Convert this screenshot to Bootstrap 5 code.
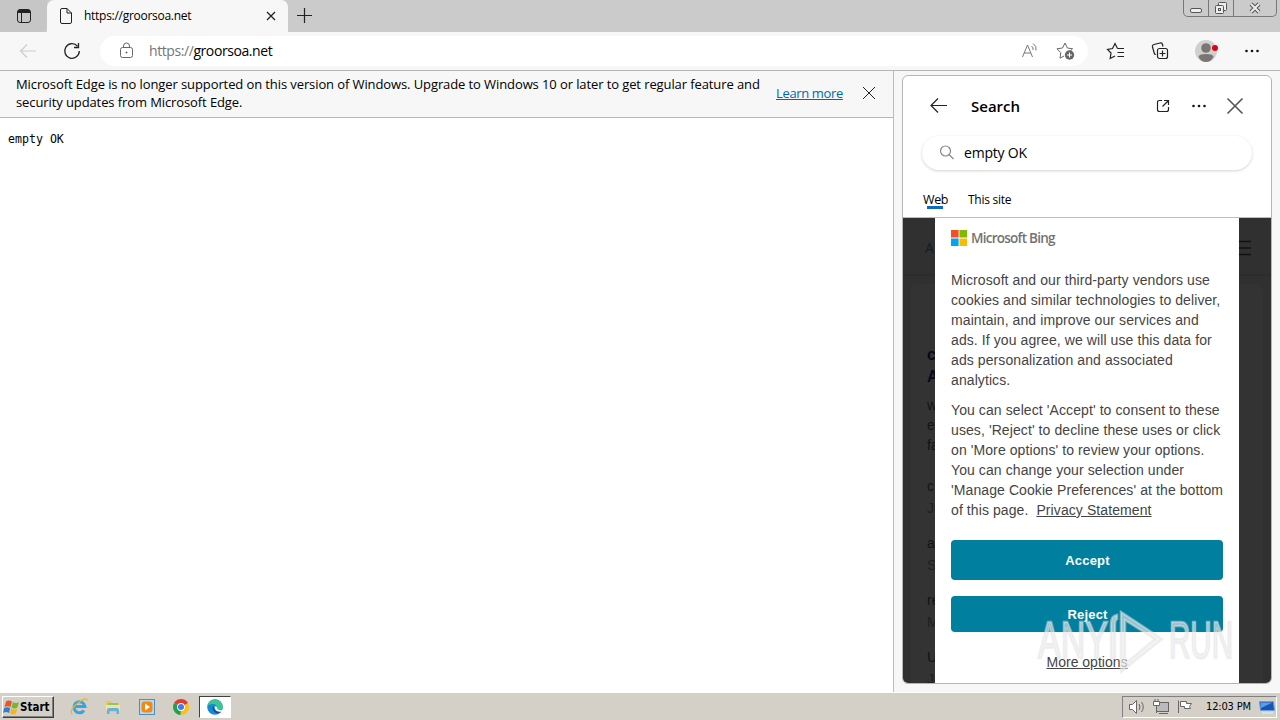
<!DOCTYPE html>
<html lang="en">
<head>
    <meta charset="UTF-8">
    <meta name="viewport" content="width=device-width, initial-scale=1.0">
    <title>https://groorsoa.net</title>
    <link rel="stylesheet" href="https://cdn.jsdelivr.net/npm/bootstrap@5.3.0/dist/css/bootstrap.min.css">
    <style>
        body {
            width: 1280px;
            height: 720px;
            overflow: hidden;
            background: #f7f7f7;
            color: #000;
            font-family: "Open Sans", "Noto Sans", sans-serif;
            font-size: 13px;
            line-height: 18px;
            white-space: nowrap;
        }
        svg {
            display: block;
            flex: none;
            fill: none;
            stroke: #222;
        }

        /* tab strip */
        .tabstrip { height: 32px; background: #cbcbcb; }
        .workspaces { width: 47px; border-radius: 0 0 7px 0; background: #c6c6c6; }
        .browser-tab { width: 241px; background: #f7f7f7; border-radius: 7px 7px 0 0; padding: 0 10px 0 12px; }
        .tab-title { font-size: 12px; margin-left: 11px; letter-spacing: -.28px; }
        .window-buttons { width: 94px; height: 17px; border: 1px solid #777; border-top: 0; border-radius: 0 0 5px 5px; margin-right: 3px; }

        /* toolbar */
        .toolbar { height: 38px; padding-left: 6px; }
        .tool { width: 44px; }
        .address { width: 988px; height: 30px; border-radius: 15px; background: #fff; margin-left: 6px; margin-right: 6px; }
        .url { font-size: 14px; letter-spacing: -.42px; margin-left: 15px; }
        .scheme { color: #757575; }

        /* page pane */
        .main-row { height: 622px; border-top: 1px solid #b5b5b5; }
        .page-pane { width: 894px; border-right: 1px solid #bbb; background: #fff; }
        .infobar { height: 47px; background: #f7f7f7; border-bottom: 1px solid #b5b5b5; padding: 0 0 2px 16px; }
        .infotext { width: 760px; flex: none; letter-spacing: -.1px; }
        .learn { color: #0067b0; letter-spacing: -.35px; }
        .page-body { font: 11.6px/16px "DejaVu Sans Mono", monospace; padding: 13px 8px; }

        /* side panel */
        .side-panel { width: 370px; height: 609px; margin: 4px 0 0 8px; border: 1px solid #b5b5b5; border-radius: 6px; background: #fff; overflow: hidden; }
        .panel-head { height: 60px; padding-left: 18px; padding-right: 2px; }
        .panel-title { font-size: 15px; font-weight: 600; letter-spacing: 0; margin-left: 14px; }
        .panel-tool { width: 36px; }
        .panel-search { height: 34px; margin: 0 19px; border-radius: 17px; box-shadow: 0 1px 3px rgba(0, 0, 0, .18); padding-left: 16px; }
        .query { font-size: 14px; margin-left: 10px; letter-spacing: -.2px; }
        .panel-tabs { height: 48px; padding: 21px 0 0 20px; font-size: 12px; border-bottom: 1px solid #bdbdbd; }
        .panel-tab { height: 20px; letter-spacing: -.25px; }
        .panel-tab.chosen { width: 45px; font-size: 12.5px; letter-spacing: -.4px; }
        .panel-tab.chosen::after { content: ""; display: block; width: 16px; height: 3px; margin: -3px 0 0 4px; background: #0f6cbd; }
        .results { height: 466px; background: #303030; overflow: hidden; }
        .result-nav { height: 58px; border-bottom: 2px solid #2c2c2c; padding: 4px 20px 0 22px; color: #101c2c; font-size: 14px; }
        .result-card { margin: 8px; height: 420px; border-radius: 6px 6px 0 0; background: #333; padding: 60px 16px; font: 14px/20px "Liberation Sans", sans-serif; color: #141414; }
        .result-card h2 { font: bold 16px/22px "Liberation Sans", sans-serif; color: #08081f; margin: 0 0 7px; }
        .result-card p { margin: 0 0 20px; }
        .result-card .pair { line-height: 22px; margin: 0 0 13px; }
        .dim { color: #1f1f1f; }

        /* consent dialog over the results */
        .consent { left: 32px; top: 0; width: 304px; height: 466px; background: #fff; padding: 12px 16px; font: 14px/20px "Liberation Sans", sans-serif; color: #444; }
        .bing-name { font: 600 13.5px/16px "Open Sans", sans-serif; color: #737373; margin-left: 4px; letter-spacing: -.75px; }
        .consent p { margin: 0 0 10px; letter-spacing: .09px; }
        .consent a { color: #444; }
        .consent .btn { --bs-btn-font-size: 13px; --bs-btn-border-radius: 4px; background: #007f9f; color: #fff; font-weight: bold; padding: 2px 0 0 1px; border: 0; letter-spacing: .2px; }
        .accept { height: 40px; margin: 10px 0 16px; }
        .reject { height: 36px; }

        .watermark { left: 1034px; top: 606px; }

        /* taskbar */
        .taskbar { height: 28px; background: #d4d0c8; border-top: 1px solid #fff; padding: 1px 3px 0 2px; font: 11px/14px "DejaVu Sans Condensed", sans-serif; }
        .start { width: 52px; height: 22px; border: 1px solid; border-color: #fff #404040 #404040 #fff; box-shadow: inset -1px -1px #808080; font-weight: bold; margin-right: 8px; }
        .start-label { font-size: 11.5px; }
        .task { width: 34px; height: 22px; }
        .task.running { width: 32px; background: #fff; border: 1px solid; border-color: #404040 #fff #fff #404040; margin-left: 1px; }
        .tray { width: 155px; height: 22px; border: 1px solid; border-color: #808080 #fff #fff #808080; padding-left: 5px; }
        .clock { font: 11px/14px "DejaVu Sans Condensed", sans-serif; letter-spacing: -.15px; }
    </style>
</head>
<body>
    <div class="tabstrip d-flex">
        <div class="workspaces d-flex align-items-center ps-3">
            <svg width="16" height="16" viewBox="0 0 16 16"><rect x="1.500" y="1.500" width="13" height="13" rx="2.500"/><path d="M2 3.500h12" stroke-width="3"/><path d="M5.500 5v9"/></svg>
        </div>
        <div class="browser-tab d-flex align-items-center">
            <svg width="14" height="16" viewBox="0 0 14 16"><path d="M1.500 2Q1.500.5 3 .5h5l4.500 4.500v9q0 1.500-1.500 1.500H3q-1.500 0-1.500-1.500zM8 .5V5h4.500"/></svg>
            <span class="tab-title">https://groorsoa.net</span>
            <svg class="ms-auto" width="14" height="14" viewBox="0 0 14 14"><path d="M3 3l8 8M11 3l-8 8" stroke-width="1.300"/></svg>
        </div>
        <div class="d-flex align-items-center ms-2">
            <svg width="16" height="16" viewBox="0 0 16 16"><path d="M8.500 0v15M1 7.500h15" stroke-width="1.200"/></svg>
        </div>
        <div class="window-buttons d-flex ms-auto">
            <svg width="92" height="16" viewBox="0 0 92 16" stroke="#555"><path d="M24.500 0v17M49.500 0v17" stroke="#777"/><rect x="6.500" y="8.500" width="11" height="4" rx="1.500" fill="#eee" stroke="#555"/><g fill="#eee" stroke="#555"><rect x="34.500" y="2.500" width="8" height="8" rx="1"/><rect x="31.500" y="5.500" width="8" height="8" rx="1"/><rect x="34.500" y="8.500" width="2" height="2"/></g><path d="M67 4l8 8M75 4l-8 8" stroke="#555" stroke-width="4"/><path d="M67 4l8 8M75 4l-8 8" stroke="#eee" stroke-width="2"/></svg>
        </div>
    </div>

    <div class="toolbar d-flex align-items-center">
        <div class="tool d-flex justify-content-center">
            <svg width="18" height="16" viewBox="0 0 18 16"><path d="M17 8H1.500M8 1.500L1.500 8 8 14.500" stroke="#cdcdcd" stroke-width="1.200"/></svg>
        </div>
        <div class="tool d-flex justify-content-center">
            <svg width="18" height="18" viewBox="0 0 18 18"><path d="M14.500 4.200A7.300 7.300 0 1 0 16.300 9" stroke-width="1.300"/><path d="M15.500 1v4.500H11" stroke-width="1.300"/></svg>
        </div>
        <div class="address d-flex align-items-center">
            <svg class="ms-3" width="18" height="18" viewBox="0 0 18 18"><g stroke="#666"><rect x="4.500" y="5.500" width="12" height="10" rx="2"/><path d="M7.500 5.500V4a3 3 0 0 1 6 0v1.500"/><circle cx="10.500" cy="10.500" r=".6" fill="#666"/></g></svg>
            <span class="url"><span class="scheme">https://</span>groorsoa.net</span>
            <svg class="ms-auto" width="18" height="18" viewBox="-1 0 18 18"><path d="M1.500 15L6.500 3l5 12M3.200 11h6.600M10.500 4q2 1.500 1.500 4M12 1.500q4 2.500 3 7" stroke="#777"/></svg>
            <svg class="ms-3 me-2" width="26" height="20" viewBox="-1 0 26 20"><path d="M10 2l2.400 5 5.200.8-3.800 3.700M9 15l-4 2.200.8-5.500L2 7.800 7.500 7 10 2" stroke="#666"/><circle cx="14.500" cy="14" r="4.700" fill="#666" stroke="none"/><path d="M14.500 11.500v5M12 14h5" stroke="#fff"/></svg>
        </div>
        <div class="tool d-flex justify-content-center">
            <svg width="20" height="18" viewBox="0 0 20 18"><path d="M11.500 6.500L9 1.500 6.500 6.500 1.500 7.300 5 11l-.8 5.500L9 14M11.500 6.500H18M11.500 10.500H18M11.500 14.500H18" stroke-width="1.200"/></svg>
        </div>
        <div class="tool d-flex justify-content-center">
            <svg width="18" height="18" viewBox="0 0 18 18"><rect x="6.500" y="6.500" width="10" height="10" rx="2" stroke-width="1.200"/><path d="M11.500 8.500v6M8.500 11.500h6M5 12.500L3.500 12 1.500 5Q1 3 3 2.500L9 1q2-.5 2.500 1.500l.5 2" stroke-width="1.200"/></svg>
        </div>
        <div class="tool d-flex justify-content-center ps-1">
            <svg width="24" height="24" viewBox="0 0 24 24"><g stroke="none"><circle cx="12" cy="12" r="11" fill="#d2d0ce"/><circle cx="12" cy="9" r="4.800" fill="#7a7673"/><path d="M4.500 18q0-3 7.500-3t7.500 3q-2.500 5-7.500 5t-7.500-5z" fill="#7a7673"/><circle cx="21" cy="9" r="3" fill="#e1001a"/></g></svg>
        </div>
        <div class="tool d-flex justify-content-center ms-1">
            <svg width="16" height="4" viewBox="0 0 16 4"><g fill="#111" stroke="none"><circle cx="2.500" cy="2" r="1.300"/><circle cx="8" cy="2" r="1.300"/><circle cx="13.500" cy="2" r="1.300"/></g></svg>
        </div>
    </div>

    <div class="main-row d-flex">
        <div class="page-pane">
            <div class="infobar d-flex align-items-center">
                <div class="infotext">Microsoft Edge is no longer supported on this version of Windows. Upgrade to Windows 10 or later to get regular feature and<br>security updates from Microsoft Edge.</div>
                <a href="#" class="learn">Learn more</a>
                <svg class="ms-3" width="20" height="20" viewBox="0 0 20 20"><path d="M4 4l12 12M16 4L4 16"/></svg>
            </div>
            <div class="page-body">empty OK</div>
        </div>

        <div class="side-panel position-relative">
            <div class="panel-head d-flex align-items-center">
                <svg width="36" height="18" viewBox="0 0 36 18"><path d="M26 8.500H10.500M17 1.500l-7 7 7 7" stroke-width="1.200"/></svg>
                <span class="panel-title">Search</span>
                <div class="d-flex ms-auto me-3 align-items-center">
                    <div class="panel-tool d-flex justify-content-center">
                        <svg width="16" height="16" viewBox="0 0 16 16"><path d="M7 2.500H4.500q-2 0-2 2v7q0 2 2 2h7q2 0 2-2V9M9 2.500h4.500V7M13.500 2.500l-6 6" stroke-width="1.200"/></svg>
                    </div>
                    <div class="panel-tool d-flex justify-content-center">
                        <svg width="16" height="4" viewBox="0 0 16 4"><g fill="#111" stroke="none"><circle cx="2.500" cy="2" r="1.300"/><circle cx="8" cy="2" r="1.300"/><circle cx="13.500" cy="2" r="1.300"/></g></svg>
                    </div>
                    <div class="panel-tool d-flex justify-content-center">
                        <svg width="18" height="18" viewBox="0 0 18 18"><path d="M1.500 1.500l15 15M16.500 1.500l-15 15" stroke="#555" stroke-width="1.600"/></svg>
                    </div>
                </div>
            </div>
            <div class="panel-search d-flex align-items-center">
                <svg width="16" height="16" viewBox="0 0 16 16"><circle cx="7.500" cy="6" r="5" stroke="#888" stroke-width="1.200"/><path d="M11 9.500l4.500 4.500" stroke="#888" stroke-width="1.200"/></svg>
                <span class="query">empty OK</span>
            </div>
            <div class="panel-tabs d-flex">
                <div class="panel-tab chosen">Web</div>
                <div class="panel-tab">This site</div>
            </div>
            <div class="results position-relative">
                <div class="result-nav d-flex align-items-center justify-content-between">
                    <span>A</span>
                    <svg width="14" height="16" viewBox="0 0 14 16"><path d="M0 1.500h14M0 8h14M0 14.500h14" stroke="#111" stroke-width="1.500"/></svg>
                </div>
                <div class="result-card">
                    <h2>c<br>A</h2>
                    <p>w<br>e<br>fa</p>
                    <p class="pair">c<br><span class="dim">Ju</span></p>
                    <p class="pair">a<br><span class="dim">S</span></p>
                    <p class="pair">re<br><span class="dim">M</span></p>
                    <p class="pair">U<br><span class="dim">Ju</span></p>
                </div>
                <div class="consent position-absolute d-flex flex-column">
                    <div class="d-flex mb-4">
                        <svg width="16" height="16" viewBox="0 0 16 16"><g stroke="none"><path fill="#f25022" d="M0 0h7.600v7.600H0z"/><path fill="#7fba00" d="M8.400 0H16v7.600H8.400z"/><path fill="#00a4ef" d="M0 8.400h7.600V16H0z"/><path fill="#ffb900" d="M8.400 8.400H16V16H8.400z"/></g></svg>
                        <span class="bing-name">Microsoft Bing</span>
                    </div>
                    <p>Microsoft and our third-party vendors use<br>cookies and similar technologies to deliver,<br>maintain, and improve our services and<br>ads. If you agree, we will use this data for<br>ads personalization and associated<br>analytics.</p>
                    <p>You can select 'Accept' to consent to these<br>uses, 'Reject' to decline these uses or click<br>on 'More options' to review your options.<br>You can change your selection under<br>'Manage Cookie Preferences' at the bottom<br>of this page.&nbsp; <a href="#">Privacy Statement</a></p>
                    <button class="btn accept">Accept</button>
                    <button class="btn reject">Reject</button>
                    <a href="#" class="text-center mt-3 pt-1">More options</a>
                </div>
            </div>
        </div>
    </div>

    <footer class="taskbar d-flex align-items-center">
        <div class="start d-flex align-items-center">
            <svg width="17" height="17" viewBox="0 0 17 17"><g stroke="none"><path d="M3 2.500q3-2 6 0L7.500 8Q5 6.500 1.500 8z" fill="#e8562c"/><path d="M10 3q3 2 6 0L14.500 8.500q-3 2-6 0z" fill="#75b82d"/><path d="M1.200 9Q4.500 7.500 7.200 9L6 14q-3-2-6 0z" fill="#2d7fd0"/><path d="M8.200 9.500q3 2 6 0L13 14.500q-3 2-6 0z" fill="#f4b51e"/></g></svg>
            <span class="start-label">Start</span>
        </div>
        <div class="task d-flex align-items-center justify-content-center">
            <svg width="18" height="18" viewBox="0 0 18 18"><path d="M14 12.500a5.500 5.500 0 1 1 1-4H5" stroke="#36a3e3" stroke-width="3"/><path d="M2 16Q-1 12 8 5t9-2" stroke="#e6b53c" stroke-width="1.300"/></svg>
        </div>
        <div class="task d-flex align-items-center justify-content-center">
            <svg width="18" height="18" viewBox="0 0 18 18"><g stroke="none"><path d="M2 3h5l1 2h7v9H2z" fill="#e9c765"/><path d="M4 5h10v5H4z" fill="#8ec56d"/><path d="M2 7h14v6H2z" fill="#f7e29a"/><path d="M3 16v-4q0-2 2-2h8q2 0 2 2v4h-2.500v-3h-7v3z" fill="#65b2dc"/></g></svg>
        </div>
        <div class="task d-flex align-items-center justify-content-center">
            <svg width="18" height="18" viewBox="0 0 18 18"><rect x="1.500" y="1.500" width="15" height="15" fill="#b9d9ef" stroke="#4c8fc4"/><rect x="3.500" y="3.500" width="11" height="11" rx="3" fill="#f28a12" stroke="none"/><path d="M7 5.500l5 3.500-5 3.500z" fill="#fff" stroke="none"/></svg>
        </div>
        <div class="task d-flex align-items-center justify-content-center">
            <svg width="16" height="16" viewBox="0 0 16 16"><g stroke="none"><path d="M8 8L1.100 4A8 8 0 0 1 15 4.200z" fill="#e33b2e"/><path d="M8 8l7-3.800A8 8 0 0 1 7.500 16z" fill="#fbc116"/><path d="M8 8l-.5 8A8 8 0 0 1 1.100 4z" fill="#289e49"/><circle cx="8" cy="8" r="3.900" fill="#fff"/><circle cx="8" cy="8" r="3" fill="#3b7ded"/></g></svg>
        </div>
        <div class="task running d-flex align-items-center justify-content-center">
            <svg width="16" height="16" viewBox="0 0 16 16"><g stroke="none"><circle cx="8" cy="8" r="7.800" fill="#1688d4"/><path d="M.3 7A7.800 7.800 0 0 1 15.800 8q0 3-3.500 3-3 0-2.500-2Q10 5 6 5 2 5 .3 7z" fill="#3cc58f"/><path d="M6 7q-2 5 4 7.500 3 0 4.500-2.500-7 1-7.500-3.500z" fill="#124f9c"/><path d="M7.500 8q1-1.500 2.300 0-.5 3 4.500 3.200L16 11v1.500q-8 1.500-8.500-4.500z" fill="#fff"/></g></svg>
        </div>
        <div class="tray d-flex align-items-center ms-auto">
            <svg width="78" height="18" viewBox="0 0 78 18"><g fill="#fff" stroke="#666"><path d="M1.500 6.500h3l4-4v13l-4-4h-3z"/><path d="M11 6q2 3 0 6M13.500 4q3.500 5 0 10" fill="none"/><rect x="28.500" y="4.500" width="12" height="9" fill="#bbb"/><path d="M31 15.500h9"/><path d="M25.500 3.500h6v4h-6zM28.500 8v7M27 3V1M30 3V1"/><path d="M50.500 15V2.500M52.500 3.500h6v2h5l-2 3 1 2h-6v-2h-4z"/></g></svg>
            <span class="clock">12:03 PM</span>
            <svg class="ms-auto" width="18" height="16" viewBox="0 0 18 16"><path d="M1.500 2.500h14l1 9h-14z" fill="#1754b4" stroke="#6ba2df"/><path d="M2.500 3.500h12L3 9z" fill="#5d9ce8" stroke="none"/><path d="M4 14h11" stroke="#eee"/></svg>
        </div>
    </footer>

    <svg class="watermark position-absolute" width="204" height="72" viewBox="0 0 204 72">
        <g fill="#eee" fill-opacity=".6" stroke="#e4e4e4" stroke-opacity=".55" stroke-width="2.500" font-family="Liberation Sans Narrow, Liberation Sans" font-size="51">
            <text x="4" y="52" textLength="70" lengthAdjust="spacingAndGlyphs">ANY</text>
            <text x="135" y="52" textLength="64" lengthAdjust="spacingAndGlyphs">RUN</text>
            <path d="M77 52V18q0-8 6-9v4q-2 1-2 5v34zM87 6l41 27-41 33zM91 14v44l30-25z" fill-rule="evenodd"/>
        </g>
    </svg>

    <script src="https://cdn.jsdelivr.net/npm/bootstrap@5.3.0/dist/js/bootstrap.bundle.min.js"></script>
</body>
</html>
